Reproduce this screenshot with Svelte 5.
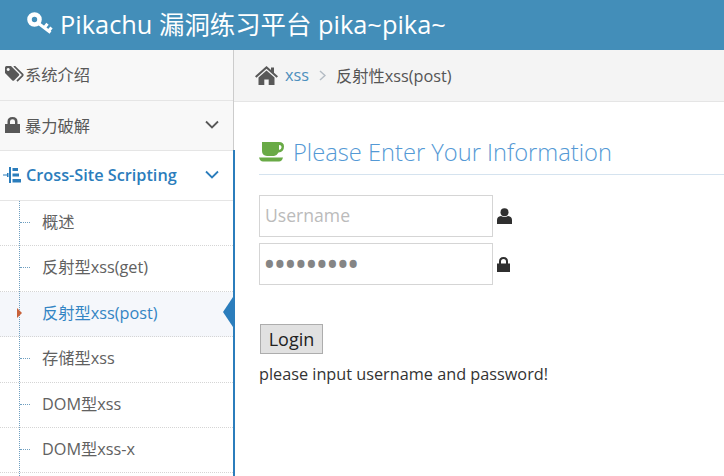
<script>
  const submenu = [
    { label: '概述' },
    { label: '反射型xss(get)' },
    { label: '反射型xss(post)', active: true },
    { label: '存储型xss' },
    { label: 'DOM型xss' },
    { label: 'DOM型xss-x' }
  ];
</script>

<div class="page">
  <header class="navbar">
    <svg class="key" viewBox="0 0 26 22" width="26" height="22">
      <circle cx="7.5" cy="7.5" r="5" fill="none" stroke="#fff" stroke-width="4.6" />
      <path d="M11 11 L23.5 20.5 M17.5 15.5 L20.5 11.8 M21.5 19 L24.5 15.5" fill="none" stroke="#fff" stroke-width="3" />
    </svg>
    <span class="brand">Pikachu 漏洞练习平台 pika~pika~</span>
  </header>

  <div class="body">
    <nav class="sidebar">
      <div class="item">
        <svg class="icon" viewBox="0 0 20 16" width="20" height="16">
          <path d="M0 1.5 Q0 0 1.5 0 H6 L14 8 Q14.6 8.8 14 9.5 L9 14.5 Q8.2 15.2 7.4 14.5 L0 7Z M3.2 2 a1.5 1.5 0 1 0 .01 0Z" fill="#585858" fill-rule="evenodd" />
          <path d="M9 0 L17.5 8.3 Q18 9 17.5 9.6 L12 15.2" fill="none" stroke="#585858" stroke-width="1.7" />
        </svg>
        <span>系统介绍</span>
      </div>
      <div class="item">
        <svg class="icon" viewBox="0 0 15 16" width="15" height="16">
          <path d="M0 7 H2.5 V4.5 Q2.5 0 7.5 0 Q12.5 0 12.5 4.5 V7 H15 V16 H0Z M5 7 H10 V4.5 Q10 2.3 7.5 2.3 Q5 2.3 5 4.5Z" fill="#585858" fill-rule="evenodd" />
        </svg>
        <span class="label">暴力破解</span>
        <svg class="chev" viewBox="0 0 14 9" width="14" height="9"><path d="M1 1.5 L7 7.5 L13 1.5" fill="none" stroke="#585858" stroke-width="1.8" /></svg>
      </div>
      <div class="item open">
        <svg class="icon tree" viewBox="0 0 18 16" width="18" height="16">
          <path d="M0 7.5 H4 V8.5 H0Z M6 0 H8 V16 H6Z M4 6 H5.5 V10 H4Z M9.5 1 H15 V4 H9.5Z M9.5 6.5 H16 V9.5 H9.5Z M9.5 12 H18 V15.5 H9.5Z" fill="#2b7dbc" />
        </svg>
        <span class="strong">Cross-Site Scripting</span>
        <svg class="chev" viewBox="0 0 14 9" width="14" height="9"><path d="M1 1.5 L7 7.5 L13 1.5" fill="none" stroke="#2b7dbc" stroke-width="1.8" /></svg>
      </div>
      <ul class="submenu">
        {#each submenu as sub}
          <li class:active={sub.active}>
            {#if sub.active}
              <span class="caret"></span>
            {:else}
              <span class="tick"></span>
            {/if}
            {sub.label}
          </li>
        {/each}
      </ul>
    </nav>

    <main class="main">
      <div class="crumbs">
        <svg class="home" viewBox="0 0 23 19" width="23" height="19">
          <path d="M11.5 0 L16 4 V1.5 H19 V6.7 L23 10.3 L21.6 11.8 L11.5 2.8 L1.4 11.8 L0 10.3Z M3.5 11.5 L11.5 4.6 L19.5 11.5 V19 H13.7 V13.5 H9.3 V19 H3.5Z" fill="#585858" />
        </svg>
        <a class="link" href="#xss">xss</a>
        <svg class="sep" viewBox="0 0 7 11" width="7" height="11"><path d="M1 1 L6 5.5 L1 10" fill="none" stroke="#b4bcc4" stroke-width="1.5" /></svg>
        <span>反射性xss(post)</span>
      </div>

      <div class="content">
        <h1 class="title">
          <svg viewBox="0 0 25 20" width="25" height="20">
            <path d="M3 0 H20 Q25 0 25 4.5 Q25 10 19.5 10.5 Q18 13.5 15 14 H8 Q3 13.5 3 9Z M20 3 V8 Q22.6 7.6 22.6 5 Q22.6 3 20 3Z" fill="#69aa46" fill-rule="evenodd" />
            <path d="M0 15.5 H24 Q23 19.5 20 19.5 H4 Q1 19.5 0 15.5Z" fill="#69aa46" />
          </svg>
          Please Enter Your Information
        </h1>

        <form class="form">
          <div class="row">
            <input type="text" placeholder="Username" />
            <svg viewBox="0 0 15 16" width="15" height="16">
              <circle cx="7.5" cy="4.2" r="4" fill="#2f2f2f" />
              <path d="M0 16 V12 Q0 8.5 4 8 Q7.5 10 11 8 Q15 8.5 15 12 V16Z" fill="#2f2f2f" />
            </svg>
          </div>
          <div class="row">
            <input class="secret" type="password" value="123456789" />
            <svg viewBox="0 0 13 15" width="13" height="15">
              <path d="M0 6.5 H2 V4.5 Q2 0 6.5 0 Q11 0 11 4.5 V6.5 H13 V15 H0Z M4 6.5 H9 V4.5 Q9 2 6.5 2 Q4 2 4 4.5Z" fill="#2f2f2f" fill-rule="evenodd" />
            </svg>
          </div>
          <button type="button" class="login">Login</button>
          <p class="msg">please input username and password!</p>
        </form>
      </div>
    </main>
  </div>
</div>

<style>
  :global(body) {
    margin: 0;
    overflow: hidden;
  }

  .page {
    width: 724px;
    height: 476px;
    overflow: hidden;
    font-family: "Open Sans", "Noto Sans CJK SC", sans-serif;
    font-size: 16.25px;
    color: #393939;
    background: #fff;
  }

  .navbar {
    height: 50px;
    background: #438eb9;
    color: #fff;
    display: flex;
    align-items: center;
    gap: 7px;
    padding: 0 0 5px 27px;
    box-sizing: border-box;
  }

  .brand {
    font-size: 25.4px;
    white-space: nowrap;
  }

  .body {
    display: flex;
    height: 426px;
  }

  .sidebar {
    position: relative;
    width: 234px;
    flex: none;
    box-sizing: border-box;
    border-right: 1px solid #ccc;
    background: #f2f2f2;
  }

  .sidebar::after {
    content: "";
    position: absolute;
    top: 100px;
    bottom: 0;
    right: -2px;
    width: 2px;
    background: #2b7dbc;
  }

  .item {
    height: 50px;
    box-sizing: border-box;
    display: flex;
    align-items: center;
    border-bottom: 1px solid #e5e5e5;
    background: #f8f8f8;
    color: #585858;
    padding: 0 0 2px 5px;
  }

  .item:first-child {
    height: 51px;
  }

  .icon {
    flex: none;
  }

  .tree {
    margin-left: -2px;
  }

  .label {
    margin-left: 5px;
  }

  .strong {
    font-weight: 600;
    margin-left: 5px;
  }

  .chev {
    margin-left: auto;
    margin-right: 14px;
  }

  .open {
    background: #fff;
    color: #2b7dbc;
  }

  .submenu {
    list-style: none;
    margin: 0;
    padding: 0;
    background: #fff;
    height: 275px;
    position: relative;
    overflow: hidden;
  }

  .submenu::before {
    content: "";
    position: absolute;
    left: 19px;
    top: 0;
    bottom: 0;
    border-left: 1px dotted #6f9fc0;
    z-index: 1;
  }

  .submenu li {
    position: relative;
    height: 45.4px;
    box-sizing: border-box;
    border-bottom: 1px dotted #d5d5d5;
    padding-left: 42px;
    line-height: 42px;
    color: #616161;
    white-space: nowrap;
  }

  .submenu li.active {
    background: #f5f7fb;
    color: #3385c4;
  }

  .submenu li.active::after {
    content: "";
    position: absolute;
    right: 0;
    top: 5px;
    border: 15px solid transparent;
    border-left: 0;
    border-right: 10px solid #2b7dbc;
  }

  .tick {
    position: absolute;
    left: 20px;
    top: 21px;
    width: 10px;
    border-top: 1px dotted #6f9fc0;
  }

  .caret {
    position: absolute;
    left: 17px;
    top: 16px;
    border: 5px solid transparent;
    border-right: 0;
    border-left: 5px solid #c86139;
    z-index: 2;
  }

  .main {
    flex: 1;
    min-width: 0;
  }

  .crumbs {
    height: 52px;
    box-sizing: border-box;
    background: #f4f4f4;
    border-bottom: 1px solid #e5e5e5;
    display: flex;
    align-items: center;
    padding-left: 21px;
    padding-bottom: 1px;
    color: #555;
  }

  .home {
    margin-right: 7px;
  }

  .link {
    color: #4c8fbd;
    text-decoration: none;
  }

  .sep {
    margin: 0 10px;
  }

  .content {
    padding: 32px 0 0 25px;
  }

  .title {
    margin: 0;
    height: 41px;
    box-sizing: border-box;
    border-bottom: 1px solid #d5e3ef;
    display: flex;
    align-items: center;
    gap: 9px;
    font-size: 23.7px;
    font-weight: 300;
    color: #5499d5;
    white-space: nowrap;
    padding-bottom: 5px;
  }

  .form {
    margin-top: 20px;
  }

  .row {
    display: flex;
    align-items: center;
    gap: 4px;
    margin-bottom: 6px;
  }

  input {
    width: 234px;
    height: 42px;
    box-sizing: border-box;
    border: 1px solid #d5d5d5;
    padding: 0 0 2px 5px;
    font-family: inherit;
    font-size: 17.6px;
    color: #858585;
    outline: none;
  }

  input::placeholder {
    color: #bbb;
    opacity: 1;
  }

  .secret {
    font-size: 34px;
    letter-spacing: -2.3px;
    padding: 0 0 0 3px;
  }

  .login {
    display: block;
    margin: 39px 0 0 1px;
    width: 63px;
    height: 30px;
    box-sizing: border-box;
    padding: 0;
    background: #e1e1e1;
    border: 1px solid #adadad;
    font-family: inherit;
    font-size: 18px;
    color: #222;
  }

  .msg {
    margin: 9px 0 0;
    color: #333;
    white-space: nowrap;
  }
</style>
